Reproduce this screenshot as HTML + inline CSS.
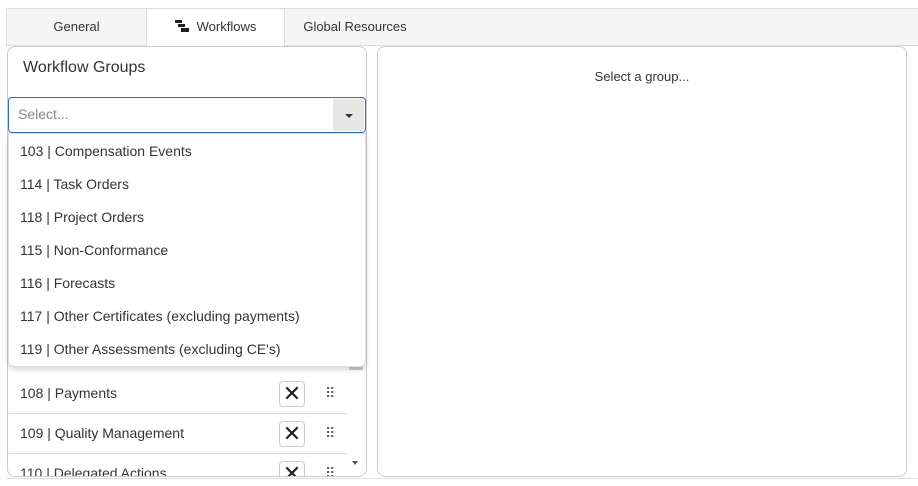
<!DOCTYPE html>
<html><head><style>
*{box-sizing:border-box;margin:0;padding:0}
body{width:918px;height:486px;background:#fff;font-family:"Segoe UI","Liberation Sans",sans-serif;font-size:13px;color:#333;position:relative;overflow:hidden}
.abs{position:absolute}
.tabs{left:6px;top:8px;width:912px;height:38px;border:1px solid #ddd;border-right:none;background:#f5f5f5}
.tab{position:absolute;top:0;height:37px;line-height:36px;text-align:center;font-size:13px;color:#333}
.panel{border:1px solid #ccc;border-radius:8px;background:#fff}
.row{position:absolute;left:1px;width:338px;height:40px;border-bottom:1px solid #ddd;padding-left:11px;line-height:39px;font-size:14px}
.x{position:absolute;left:270px;top:7px;width:26px;height:26px;border:1px solid #ccc;border-radius:4px;text-align:center;line-height:24px;font-size:22px;color:#222}
.dots{position:absolute;left:316px;top:0;color:#555;font-size:14px;letter-spacing:-1px}
.item{position:absolute;left:11px;height:33px;line-height:33px;font-size:14px}
</style></head><body>
<div class="abs tabs">
 <div class="tab" style="left:0;width:139px">General</div>
 <div class="tab" style="left:139px;width:139px;background:#fff;border-left:1px solid #ddd;border-right:1px solid #ddd;height:38px">
  <span style="display:inline-block;position:relative;width:14px;height:12px;vertical-align:-1px;margin-right:8px">
   <i style="position:absolute;left:0;top:0;width:7px;height:3px;background:#222"></i>
   <i style="position:absolute;left:3px;top:4px;width:7px;height:3px;background:#222"></i>
   <i style="position:absolute;left:6px;top:8px;width:8px;height:4px;background:#222"></i>
  </span>Workflows</div>
 <div class="tab" style="left:278px;width:140px">Global Resources</div>
</div>
<div class="abs" style="left:6px;top:478px;width:912px;height:1px;background:#ddd"></div>

<div class="abs panel" style="left:7px;top:46px;width:360px;height:431px;overflow:hidden">
 <div class="abs" style="left:15px;top:12px;font-size:16px;color:#333">Workflow Groups</div>
 <div class="abs" style="left:0;top:320px;width:340px;height:110px">
  <div class="row" style="top:7px">108 | Payments<div class="x">✕</div><div class="dots">⠿</div></div>
  <div class="row" style="top:47px">109 | Quality Management<div class="x">✕</div><div class="dots">⠿</div></div>
  <div class="row" style="top:87px">110 | Delegated Actions<div class="x">✕</div><div class="dots">⠿</div></div>
 </div>
 <div class="abs" style="left:341px;top:318px;width:14px;height:5px;background:#ccc"></div>
 <div class="abs" style="left:344px;top:414px;width:0;height:0;border-left:3px solid transparent;border-right:3px solid transparent;border-top:4px solid #555"></div>
</div>

<div class="abs" style="left:8px;top:97px;width:358px;height:36px;border:1px solid #2f6fb6;border-radius:4px;background:#fff">
 <div class="abs" style="left:9px;top:8px;color:#888;font-size:14px">Select...</div>
 <div class="abs" style="left:324px;top:1px;width:31px;height:32px;background:#e6e6e6;border-radius:0 3px 3px 0"></div>
 <div class="abs" style="left:336px;top:16px;width:0;height:0;border-left:4px solid transparent;border-right:4px solid transparent;border-top:4px solid #333"></div>
</div>
<div class="abs" style="left:8px;top:133px;width:358px;height:234px;background:#fff;border:1px solid #ddd;border-radius:0 0 6px 6px;box-shadow:0 3px 6px rgba(0,0,0,.15)">
 <div class="item" style="top:1px">103 | Compensation Events</div>
 <div class="item" style="top:34px">114 | Task Orders</div>
 <div class="item" style="top:67px">118 | Project Orders</div>
 <div class="item" style="top:100px">115 | Non-Conformance</div>
 <div class="item" style="top:133px">116 | Forecasts</div>
 <div class="item" style="top:166px">117 | Other Certificates (excluding payments)</div>
 <div class="item" style="top:199px">119 | Other Assessments (excluding CE's)</div>
</div>

<div class="abs panel" style="left:377px;top:46px;width:530px;height:431px">
 <div class="abs" style="left:0;width:100%;top:22px;text-align:center">Select a group...</div>
</div>
</body></html>
